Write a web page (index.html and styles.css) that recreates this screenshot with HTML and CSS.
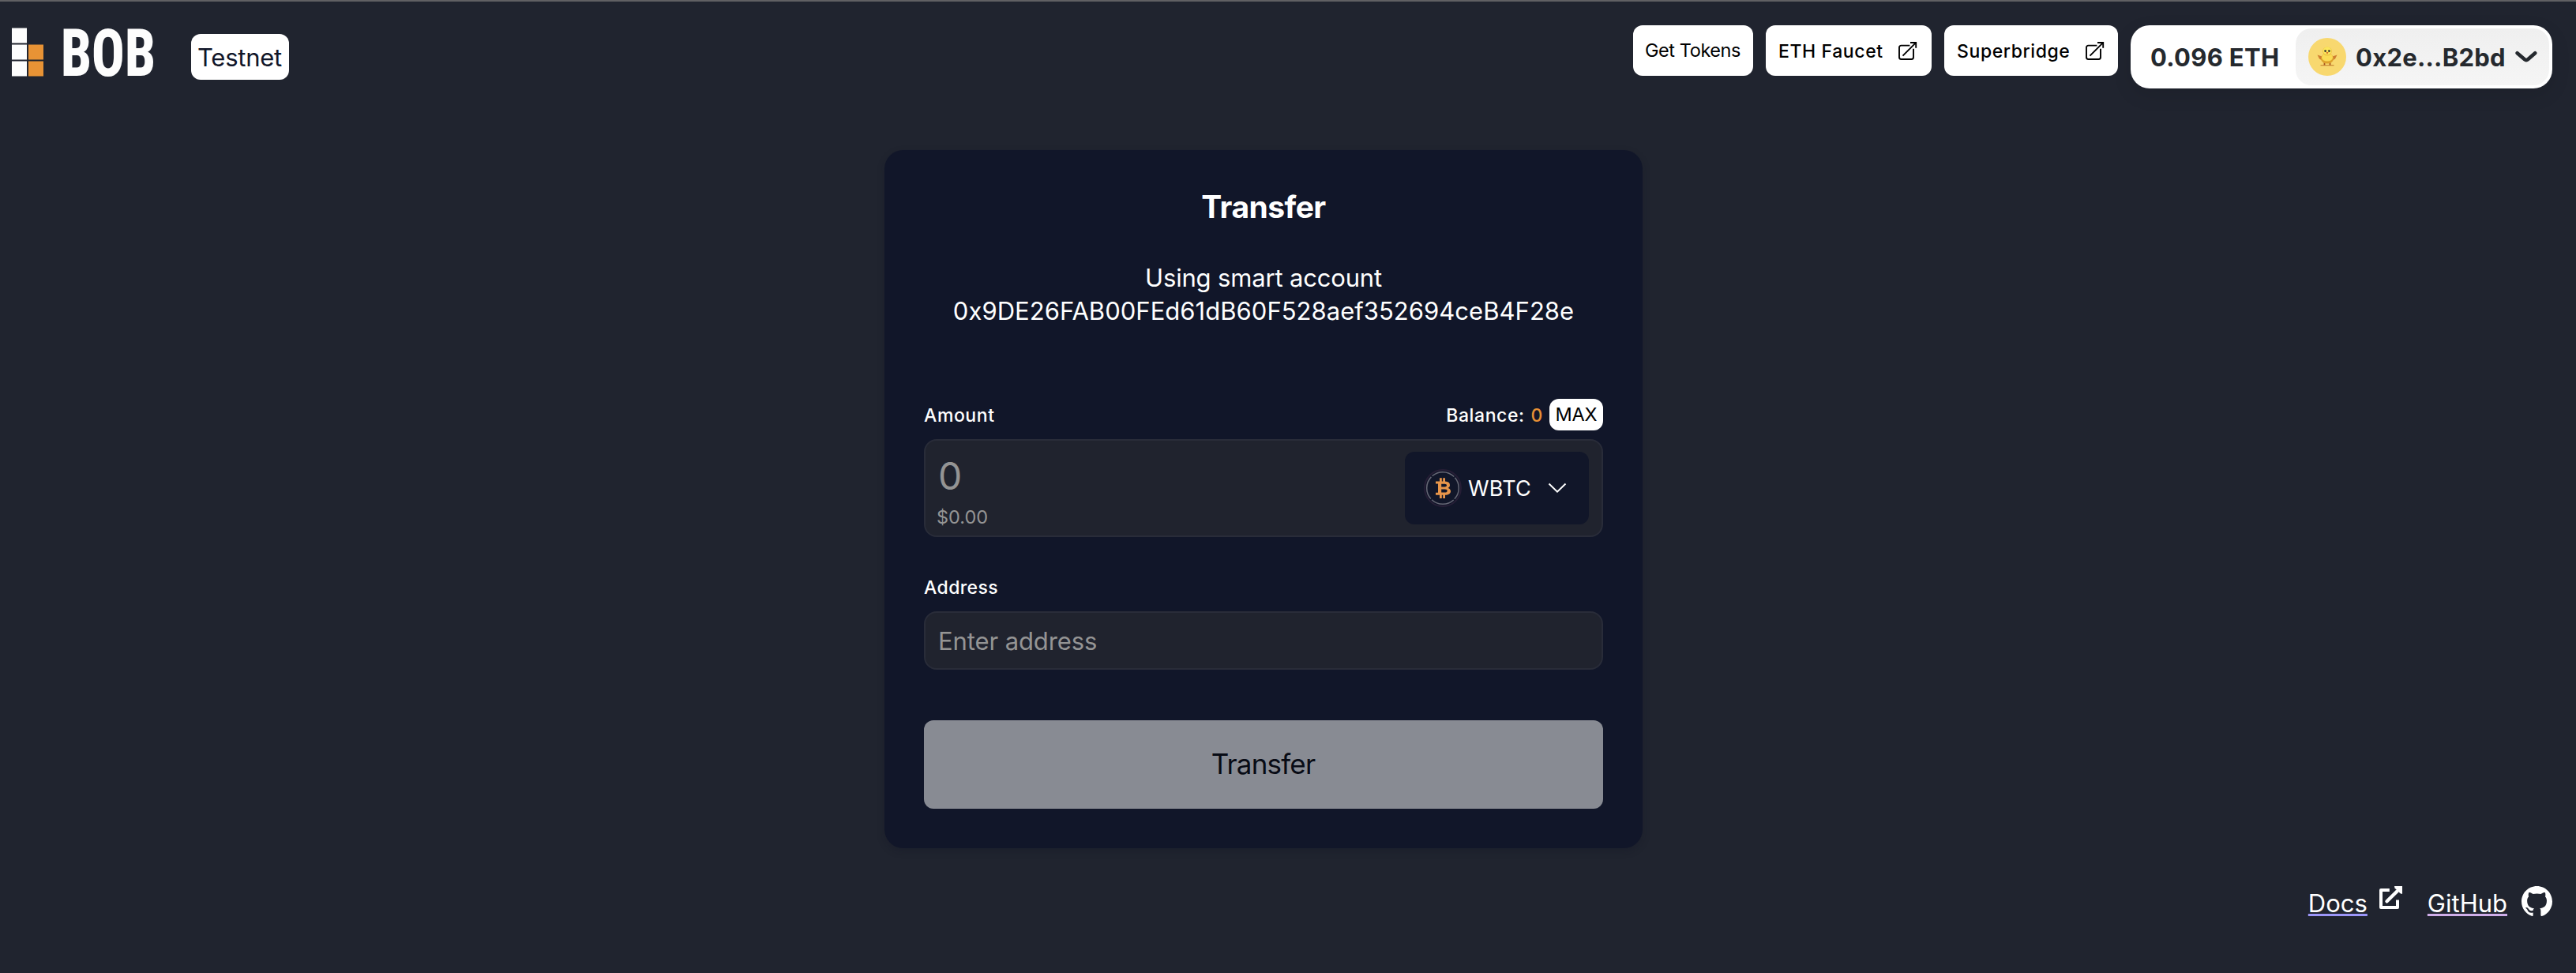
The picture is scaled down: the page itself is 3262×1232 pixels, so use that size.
FILE: index.html
```html
<!DOCTYPE html>
<html lang="en">
<head>
<meta charset="utf-8">
<title>BOB Testnet</title>
<link rel="stylesheet" href="styles.css">
</head>
<body>
<header class="header">
  <div class="brand">
    <svg class="logo" width="184" height="64" viewBox="0 0 184 64" role="img" aria-label="BOB">
      <g fill="#fdfdfd">
        <rect x="0" y="3.5" width="19" height="19"/>
        <rect x="0" y="24.5" width="19" height="19"/>
        <rect x="0" y="45.5" width="19" height="19"/>
      </g>
      <g fill="#e89335">
        <rect x="21" y="24.5" width="19" height="19"/>
        <rect x="21" y="45.5" width="19" height="19"/>
      </g>
      <text class="wordmark" x="62" y="63.5" textLength="120" lengthAdjust="spacingAndGlyphs">BOB</text>
    </svg>
    <span class="badge">Testnet</span>
  </div>
  <nav class="actions">
    <button class="btn btn-tokens">Get Tokens</button>
    <a class="btn btn-faucet"><span class="btn-text">ETH Faucet</span>
      <svg width="25" height="25" viewBox="0 0 25 25" fill="none" stroke="#000" stroke-width="1.9"><path d="M15.4 5.6H4.4a2.4 2.4 0 0 0-2.4 2.4V20.600a2.400 2.400 0 0 0 2.400 2.400H17.600a2.400 2.400 0 0 0 2.400-2.400V9.700M6.500 18.600L23 2.100M16 2H23.200V8.800"/></svg>
    </a>
    <a class="btn btn-bridge"><span class="btn-text">Superbridge</span>
      <svg width="25" height="25" viewBox="0 0 25 25" fill="none" stroke="#000" stroke-width="1.9"><path d="M15.4 5.6H4.4a2.4 2.4 0 0 0-2.4 2.4V20.600a2.400 2.400 0 0 0 2.400 2.400H17.600a2.400 2.400 0 0 0 2.400-2.400V9.700M6.500 18.600L23 2.100M16 2H23.200V8.800"/></svg>
    </a>
    <div class="wallet">
      <span class="wallet-balance">0.096 ETH</span>
      <button class="wallet-account">
        <svg width="48" height="48" viewBox="0 0 48 48">
          <circle cx="24" cy="24" r="24" fill="#f8d86f"/>
          <path d="M15.500 34.700H32.500" stroke="#c98a35" stroke-width="1.200"/>
          <path d="M20.500 31v3.500M27.500 31v3.500" stroke="#a9561f" stroke-width="1.800"/>
          <path d="M17.500 23.500L11.500 21.500L14 26.500L17.500 28.500ZM30.500 23.500L36.500 21.500L34 26.500L30.500 28.500Z" fill="#cf7f32"/>
          <ellipse cx="24" cy="26" rx="8" ry="6.600" fill="#dfa32c"/>
          <ellipse cx="24" cy="24.600" rx="7" ry="5" fill="#fadc55"/>
          <ellipse cx="24" cy="17" rx="5.800" ry="5.500" fill="#e9be3c"/>
          <ellipse cx="24" cy="16.500" rx="5.200" ry="4.900" fill="#fbe65c"/>
          <circle cx="21.600" cy="16.600" r="1.400" fill="#35352a"/>
          <circle cx="26.400" cy="16.600" r="1.400" fill="#35352a"/>
          <path d="M22.500 18.100h3L24 21z" fill="#d8702a"/>
        </svg>
        <span class="wallet-address">0x2e...B2bd</span>
        <svg width="28" height="16" viewBox="0 0 28 16" fill="none" stroke="#25292e" stroke-width="4.600" stroke-linecap="round" stroke-linejoin="round"><path d="M2.600 3.300L12 11.300Q14 13 16 11.300L25.200 3.300"/></svg>
      </button>
    </div>
  </nav>
</header>

<main class="main">
  <section class="card">
    <h1 class="card-title">Transfer</h1>
    <p class="account">Using smart account<br><span class="account-id">0x9DE26FAB00FEd61dB60F528aef352694ceB4F28e</span></p>

    <div class="field-head">
      <span class="label">Amount</span>
      <div class="balance">
        <span class="balance-label">Balance:</span>
        <span class="balance-value">0</span>
        <button class="max">MAX</button>
      </div>
    </div>
    <div class="field field-amount">
      <div class="amount">
        <span class="amount-value">0</span>
        <span class="amount-usd">$0.00</span>
      </div>
      <button class="token">
        <svg width="48" height="48" viewBox="0 0 48 48" fill="none">
          <circle cx="24" cy="24" r="23" stroke="#261e36" stroke-width="1.800"/>
          <circle cx="24" cy="24" r="20.300" stroke="#666775" stroke-width="1.500" stroke-dasharray="30.300 1.590" stroke-dashoffset="-16.700"/>
          <path fill="#e8954a" fill-rule="evenodd" d="M15 15.500H20V11.300H22.800V15.500H24.200V11.300H27V15.600C31 15.700 33 17.500 33 20.200C33 22 32.100 23.300 30.600 23.900C32.700 24.400 34 26 34 28C34 31 31.300 32.700 27 32.800V37H24.200V32.800H22.800V37H20V32.800H15V29.800H18V18.500H15ZM22.200 18.700V22.500H26.200C28 22.500 29 21.800 29 20.600C29 19.400 28 18.700 26.200 18.700ZM22.200 25.500V29.600H26.700C28.700 29.600 29.700 28.800 29.700 27.500C29.700 26.200 28.700 25.500 26.700 25.500Z"/>
        </svg>
        <span class="token-name">WBTC</span>
        <svg width="24" height="14" viewBox="0 0 24 14" fill="none" stroke="#fff" stroke-width="2"><path d="M1.500 1.500L12 11.700L22.500 1.500"/></svg>
      </button>
    </div>

    <div class="field-head field-head-address">
      <span class="label label-address">Address</span>
    </div>
    <div class="field field-address">Enter address</div>

    <button class="submit">Transfer</button>
  </section>
</main>

<footer class="footer">
  <a class="link link-docs">Docs</a>
  <svg class="docs-icon" width="29" height="29" viewBox="0 0 29 29" fill="none" stroke="#fff"><path stroke-width="4" stroke-linejoin="round" d="M12.800 5.100H2V27H23V17.500"/><path stroke-width="4.400" stroke-linecap="round" d="M9.500 19.300L22.500 6.500"/><path fill="#fff" stroke="none" d="M19 0H29V10L26.500 9.300L19.500 2.500Z"/></svg>
  <a class="link link-github">GitHub</a>
  <svg class="github-icon" width="39" height="39" viewBox="0 0 16 16" preserveAspectRatio="none" fill="#fff"><path d="M8 0C3.580 0 0 3.580 0 8c0 3.540 2.290 6.530 5.470 7.590.4.070.55-.17.55-.38 0-.19-.01-.82-.01-1.490-2.010.37-2.530-.49-2.690-.94-.09-.23-.48-.94-.82-1.130-.28-.15-.68-.52-.01-.53.63-.01 1.080.58 1.230.82.72 1.210 1.870.87 2.330.66.07-.52.28-.87.51-1.070-1.780-.2-3.640-.89-3.640-3.950 0-.87.31-1.590.82-2.150-.08-.2-.36-1.020.08-2.120 0 0 .67-.21 2.200.82.64-.18 1.320-.27 2-.27s1.360.09 2 .27c1.530-1.040 2.200-.82 2.200-.82.44 1.100.16 1.920.08 2.120.51.56.82 1.270.82 2.150 0 3.070-1.870 3.750-3.650 3.950.29.25.54.73.54 1.480 0 1.070-.01 1.930-.01 2.200 0 .21.15.46.55.38A8.010 8.010 0 0 0 16 8c0-4.420-3.580-8-8-8z"/></svg>
</footer>
</body>
</html>
```
FILE: styles.css
```css
* {
  box-sizing: border-box;
}

body {
  margin: 0;
  min-height: 1232px;
  border-top: 2px solid #606063;
  background: #20242f;
  color: #fff;
  font-family: Inter, "Liberation Sans", sans-serif;
  font-size: 31px;
}

button {
  border: 0;
  margin: 0;
  padding: 0;
  font: inherit;
  color: inherit;
}

svg {
  display: block;
  flex: none;
}

/* Header */
.header {
  display: flex;
  justify-content: space-between;
  align-items: flex-start;
  height: 188px;
  padding: 30px 30px 0 15px;
}

.brand {
  display: flex;
  align-items: flex-start;
  gap: 43px;
}

.logo {
  overflow: visible;
}

.wordmark {
  font-family: Roboto, Inter, sans-serif;
  font-size: 83px;
  font-weight: 800;
  font-stretch: 75%;
  fill: #fdfdfd;
}

.badge {
  width: 124px;
  height: 58px;
  margin-top: 11px;
  padding: 1px 0 0 8px;
  border-radius: 12px;
  background: #fff;
  color: #111629;
  line-height: 58px;
  letter-spacing: -0.26px;
}

.actions {
  display: flex;
  align-items: flex-start;
  gap: 16px;
}

.btn {
  display: flex;
  align-items: center;
  justify-content: space-between;
  height: 64px;
  border-radius: 12px;
  background: #fff;
  color: #000;
  font-size: 23px;
  font-weight: 500;
  line-height: 64px;
  letter-spacing: 0.6px;
  white-space: nowrap;
}

.btn-text {
  padding-top: 2px;
}

.btn-tokens {
  width: 152px;
  padding: 0 0 1px 15px;
  font-size: 23.5px;
  font-weight: 400;
  letter-spacing: -0.43px;
}

.btn-faucet {
  width: 210px;
  padding: 0 18px 0 16px;
}

.btn-bridge {
  width: 220px;
  padding: 0 17px 0 16px;
}

.wallet {
  display: flex;
  align-items: center;
  justify-content: space-between;
  width: 534px;
  height: 80px;
  padding: 0 4px 0 25px;
  border-radius: 24px;
  background: #fff;
  box-shadow: 0 8px 24px rgba(0, 0, 0, 0.1);
  color: #25292e;
  font-weight: 700;
}

.wallet-balance {
  letter-spacing: 0.32px;
}

.wallet-account {
  display: flex;
  align-items: center;
  gap: 12px;
  width: 321px;
  height: 72px;
  padding-left: 16px;
  border-radius: 20px;
  background: linear-gradient(#efefef, #f5f5f5);
}

.wallet-address {
  letter-spacing: 0.25px;
}

/* Transfer card */
.main {
  width: 3200px;
}

.card {
  display: flex;
  flex-direction: column;
  width: 960px;
  margin: 0 auto;
  padding: 50px;
  border-radius: 24px;
  background: #111629;
  box-shadow: 0 4px 10px rgba(16, 20, 36, 0.25);
}

.card-title {
  margin: 0;
  font-size: 39px;
  font-weight: 700;
  line-height: 44px;
  letter-spacing: -0.55px;
  text-align: center;
}

.account {
  margin: 47px 0 0;
  line-height: 42px;
  letter-spacing: -0.17px;
  text-align: center;
}

.account-id {
  letter-spacing: 0.03px;
}

.field-head {
  display: flex;
  align-items: center;
  justify-content: space-between;
  height: 40px;
  margin: 90px 0 11px;
  font-size: 23px;
  font-weight: 500;
  line-height: 40px;
  letter-spacing: 0.58px;
}

.field-head-address {
  margin: 44px 0 10px;
}

.label,
.balance-label,
.balance-value {
  padding-top: 1px;
}

.label-address {
  padding: 0;
  letter-spacing: 0.4px;
}

.balance {
  display: flex;
  align-items: center;
  gap: 8px;
}

.balance-value {
  color: #e79035;
}

.max {
  width: 68px;
  height: 40px;
  padding-bottom: 1px;
  border-radius: 12px;
  background: #fff;
  color: #000;
  font-size: 23.5px;
  font-weight: 400;
  letter-spacing: -0.22px;
}

.field {
  display: flex;
  align-items: center;
  justify-content: space-between;
  border: 2px solid #292c39;
  border-radius: 16px;
  background: #20232e;
  color: #949494;
}

.field-amount {
  height: 124px;
  padding: 0 16px 0 14px;
}

.amount {
  display: flex;
  flex-direction: column;
  padding-top: 12px;
}

.amount-value {
  padding-left: 2px;
  font-size: 48px;
  line-height: 60px;
}

.amount-usd {
  font-size: 23.5px;
  line-height: 43px;
}

.token {
  display: flex;
  align-items: center;
  width: 233px;
  height: 92px;
  padding-left: 24px;
  border-radius: 12px;
  background: #111629;
  color: #fff;
  font-size: 27px;
}

.token-name {
  margin: 0 21px 0 8px;
  letter-spacing: 0.21px;
}

.field-address {
  height: 74px;
  padding: 1px 16px 0;
  letter-spacing: -0.1px;
}

.submit {
  height: 112px;
  margin-top: 64px;
  padding: 0 1px 2px 0;
  border-radius: 12px;
  background: #888b93;
  color: #080b15;
  font-size: 35px;
  letter-spacing: -0.8px;
}

/* Footer */
.footer {
  display: flex;
  align-items: flex-start;
  justify-content: flex-end;
  margin-top: 48px;
  padding-right: 30px;
}

.link {
  margin-top: 2px;
  line-height: 40px;
  text-decoration: underline 3px;
  text-decoration-skip-ink: none;
  text-underline-offset: 2px;
}

.link-docs {
  margin-right: 15px;
  text-decoration-color: #9c96f8;
}

.docs-icon {
  margin-right: 32px;
}

.link-github {
  margin-right: 18px;
  text-decoration-color: #cfaee9;
}
```
